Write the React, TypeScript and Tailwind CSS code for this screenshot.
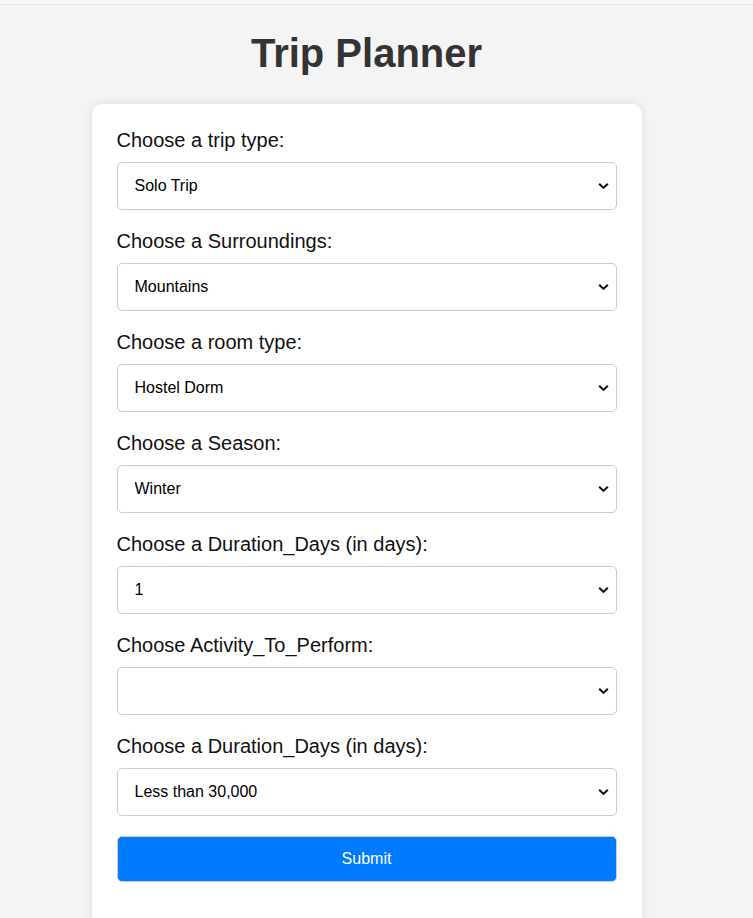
import React from 'react';

const fields = [
  { label: 'Choose a trip type:', value: 'Solo Trip' },
  { label: 'Choose a Surroundings:', value: 'Mountains' },
  { label: 'Choose a room type:', value: 'Hostel Dorm' },
  { label: 'Choose a Season:', value: 'Winter' },
  { label: 'Choose a Duration_Days (in days):', value: '1' },
  { label: 'Choose Activity_To_Perform:', value: '' },
  { label: 'Choose a Duration_Days (in days):', value: 'Less than 30,000' },
];

const Chevron = () => (
  <svg
    className="pointer-events-none absolute right-[8px] top-1/2 -translate-y-1/2"
    width="11"
    height="7"
    viewBox="0 0 11 7"
    fill="none"
  >
    <path d="M1.2 1.2 L5.5 5.4 L9.8 1.2" stroke="#111" strokeWidth="2.1" />
  </svg>
);

export default function App() {
  return (
    <div className="min-h-[918px] bg-[#f4f4f4] font-['Liberation_Sans',Arial,sans-serif] overflow-hidden">
      <div className="h-[5px] bg-[#f5f6f8] border-b border-[#e8eaee]" />
      <div className="w-[733px]">
        <h1 className="mt-[25px] mb-[28px] text-center text-[40px] leading-[46px] font-bold text-[#333]">
          Trip Planner
        </h1>
        <div className="mx-auto w-[550px] bg-white rounded-[10px] shadow-[0_0_10px_rgba(0,0,0,0.1)] px-[25px] pt-[25px] pb-[60px]">
          <form onSubmit={(e) => e.preventDefault()}>
            {fields.map((f, i) => (
              <div key={i}>
                <label className="block text-[20px] leading-[23px] text-[#111] mb-[10px]">{f.label}</label>
                <div className="relative mb-[20px]">
                  <select
                    defaultValue={f.value}
                    className="block w-full h-[48px] pl-[17px] pr-[30px] appearance-none text-[16px] leading-[20px] text-black bg-white border border-[#ccc] rounded-[5px]"
                  >
                    <option value={f.value}>{f.value}</option>
                  </select>
                  <Chevron />
                </div>
              </div>
            ))}
            <button
              type="submit"
              className="block w-full h-[46px] text-[16px] text-white bg-[#007bff] border border-[#ccc] rounded-[5px]"
            >
              Submit
            </button>
          </form>
        </div>
      </div>
    </div>
  );
}
